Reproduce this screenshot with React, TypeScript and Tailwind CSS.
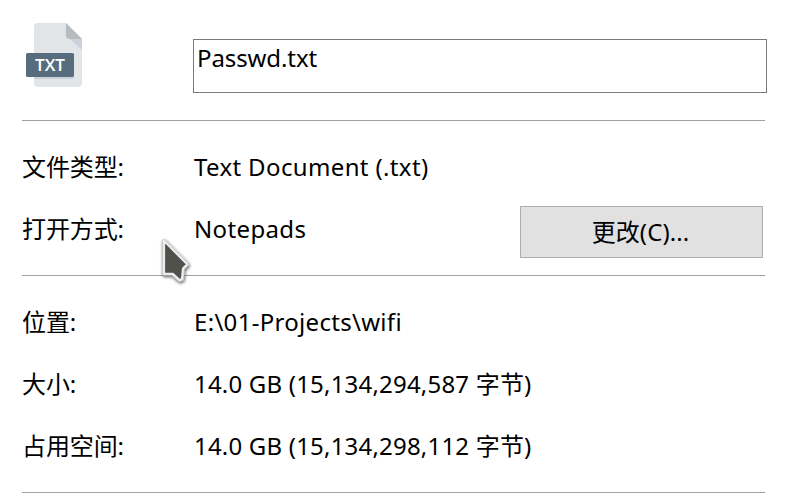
import type { ReactNode } from "react";

const font = 'font-["Noto_Sans","Noto_Sans_CJK_SC",sans-serif]';

function FileIcon() {
  return (
    <svg className="block h-[66px] w-[60px]" viewBox="0 0 60 66">
      <path d="M12 1H40L56 17V61a4 4 0 0 1-4 4H12a4 4 0 0 1-4-4V5a4 4 0 0 1 4-4Z" fill="#e2e5e7" />
      <path d="M44 17L56 28V17Z" fill="#cad1d8" />
      <path d="M40 1L56 17H44a4 4 0 0 1-4-4Z" fill="#b7bbbe" />
      <path d="M8 55H46a2 2 0 0 0 2-2v2a2 2 0 0 1-2 2H8Z" fill="#cad1d8" />
      <rect x="0" y="31" width="48" height="24" rx="1.5" fill="#576d7e" />
      <text x="9" y="49" textLength="30" lengthAdjust="spacingAndGlyphs" fontSize="15.5" fontWeight="600" fill="#fff" fontFamily="Open Sans, sans-serif">
        TXT
      </text>
    </svg>
  );
}

function Pointer() {
  const outline = "M10 10.8L33.3 34.3L29 38.6L28 49L25.6 50L18.8 43.8H10Z";
  return (
    <svg className="absolute left-[154px] top-[230px] h-[62px] w-[44px]" viewBox="0 0 44 62">
      <defs>
        <filter id="shadow" x="-40%" y="-40%" width="190%" height="190%">
          <feDropShadow dx="0.6" dy="1.4" stdDeviation="1.7" floodOpacity="0.7" />
        </filter>
      </defs>
      <path d={outline} fill="none" stroke="#c4c4c4" strokeWidth="3.6" strokeLinejoin="round" filter="url(#shadow)" />
      <path d={outline} fill="#50504d" stroke="#ededed" strokeWidth="2.2" strokeLinejoin="round" />
    </svg>
  );
}

function Row({ label, children }: { label: string; children: ReactNode }) {
  return (
    <div className="flex h-[62px] items-center">
      <div className="w-[172px] shrink-0 tracking-[-0.1px]">{label}</div>
      <div className="flex grow items-center justify-between">{children}</div>
    </div>
  );
}

export default function App() {
  return (
    <main className={`relative h-[494px] w-[792px] overflow-hidden bg-white pl-[22px] text-[24px] leading-[32px] whitespace-pre text-black ${font}`}>
      <header className="flex h-[120px]">
        <div className="w-[171px] shrink-0 pt-[22px] pl-1">
          <FileIcon />
        </div>
        <div className="mt-[39px] h-[54px] w-[574px] border border-[#7a7a7a] px-[3px] pt-[2px]">
          <span className="tracking-[-0.1px]">Passwd.txt</span>
        </div>
      </header>
      <section className="h-[155px] w-[743px] border-t border-[#a0a0a0] pt-[15px]">
        <Row label="文件类型:">
          <span className="tracking-[0.36px]">Text Document (.txt)</span>
        </Row>
        <Row label="打开方式:">
          <span className="tracking-[0.36px]">Notepads</span>
          <button className="mt-[6px] mr-[2px] h-[52px] w-[243px] border border-[#adadad] bg-[#e1e1e1] pr-[2px] tracking-[0.1px]">更改(C)...</button>
        </Row>
      </section>
      <section className="h-[217px] w-[743px] border-t border-[#a0a0a0] pt-[15px]">
        <Row label="位置:">
          <span className="tracking-[0.3px]">E:\01-Projects\wifi</span>
        </Row>
        <Row label="大小:">
          <span className="tracking-[0.2px]">14.0 GB (15,134,294,587 字节)</span>
        </Row>
        <Row label="占用空间:">
          <span className="tracking-[0.2px]">14.0 GB (15,134,298,112 字节)</span>
        </Row>
      </section>
      <hr className="w-[743px] border-[#a0a0a0]" />
      <Pointer />
    </main>
  );
}
